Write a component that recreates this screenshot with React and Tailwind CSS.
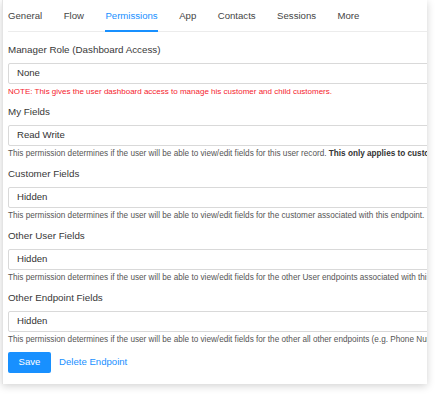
import { useState } from 'react';

const tabs = ['General', 'Flow', 'Permissions', 'App', 'Contacts', 'Sessions', 'More'];

const fields = [
  {
    label: 'My Fields',
    value: 'Read Write',
    help: 'This permission determines if the user will be able to view/edit fields for this user record.',
    bold: 'This only applies to customer users.',
  },
  {
    label: 'Customer Fields',
    value: 'Hidden',
    help: 'This permission determines if the user will be able to view/edit fields for the customer associated with this endpoint.',
  },
  {
    label: 'Other User Fields',
    value: 'Hidden',
    help: 'This permission determines if the user will be able to view/edit fields for the other User endpoints associated with this customer.',
  },
  {
    label: 'Other Endpoint Fields',
    value: 'Hidden',
    help: 'This permission determines if the user will be able to view/edit fields for the other all other endpoints (e.g. Phone Numbers).',
  },
];

function Select({ value }) {
  return (
    <div className="h-[21px] w-[520px] border border-[#d9d9d9] rounded-[2px] bg-white flex items-center pl-[8px] text-[9.6px] text-[#333]">
      {value}
    </div>
  );
}

export default function App() {
  const [active, setActive] = useState('Permissions');

  return (
    <div
      className="w-[438px] h-[398px] bg-white overflow-hidden pl-[2px]"
      style={{ fontFamily: '"Liberation Sans", Arial, sans-serif' }}
    >
      <div className="w-[425px] h-[384px] bg-white border-l border-[#e4e4e4] shadow-[0_2px_8px_rgba(0,0,0,0.18)] overflow-hidden pl-[5px]">
        <div className="flex gap-[21.5px] h-[32px] border-b border-[#ececec] whitespace-nowrap">
          {tabs.map((t) => (
            <button
              key={t}
              onClick={() => setActive(t)}
              className={
                'flex items-center h-[32px] pt-[2px] text-[9.6px] border-b-2 ' +
                (t === active ? 'border-[#1890ff] text-[#1890ff]' : 'border-transparent text-[#444]')
              }
            >
              {t}
            </button>
          ))}
        </div>

        <div className="pt-[12px]">
          <div className="h-[12px] leading-[12px] text-[9.8px] text-[#383838]">Manager Role (Dashboard Access)</div>
          <div className="mt-[7px]">
            <Select value="None" />
          </div>
          <div className="mt-[3px] h-[10px] leading-[10px] text-[8px] text-[#f5222d] whitespace-nowrap">
            NOTE: This gives the user dashboard access to manage his customer and child customers.
          </div>

          {fields.map((f) => (
            <div key={f.label} className="mt-[9px]">
              <div className="h-[12px] leading-[12px] text-[9.8px] text-[#383838]">{f.label}</div>
              <div className="mt-[7px]">
                <Select value={f.value} />
              </div>
              <div className="mt-[3px] h-[10px] leading-[10px] text-[8.2px] text-[#555] whitespace-nowrap">
                {f.help} {f.bold && <span className="font-bold text-[#333]">{f.bold}</span>}
              </div>
            </div>
          ))}

          <div className="mt-[7px] flex items-center gap-[8px]">
            <button className="h-[21px] w-[43px] rounded-[2px] bg-[#1890ff] text-white text-[9.6px]">Save</button>
            <button className="text-[9.6px] text-[#1890ff]">Delete Endpoint</button>
          </div>
        </div>
      </div>
    </div>
  );
}
